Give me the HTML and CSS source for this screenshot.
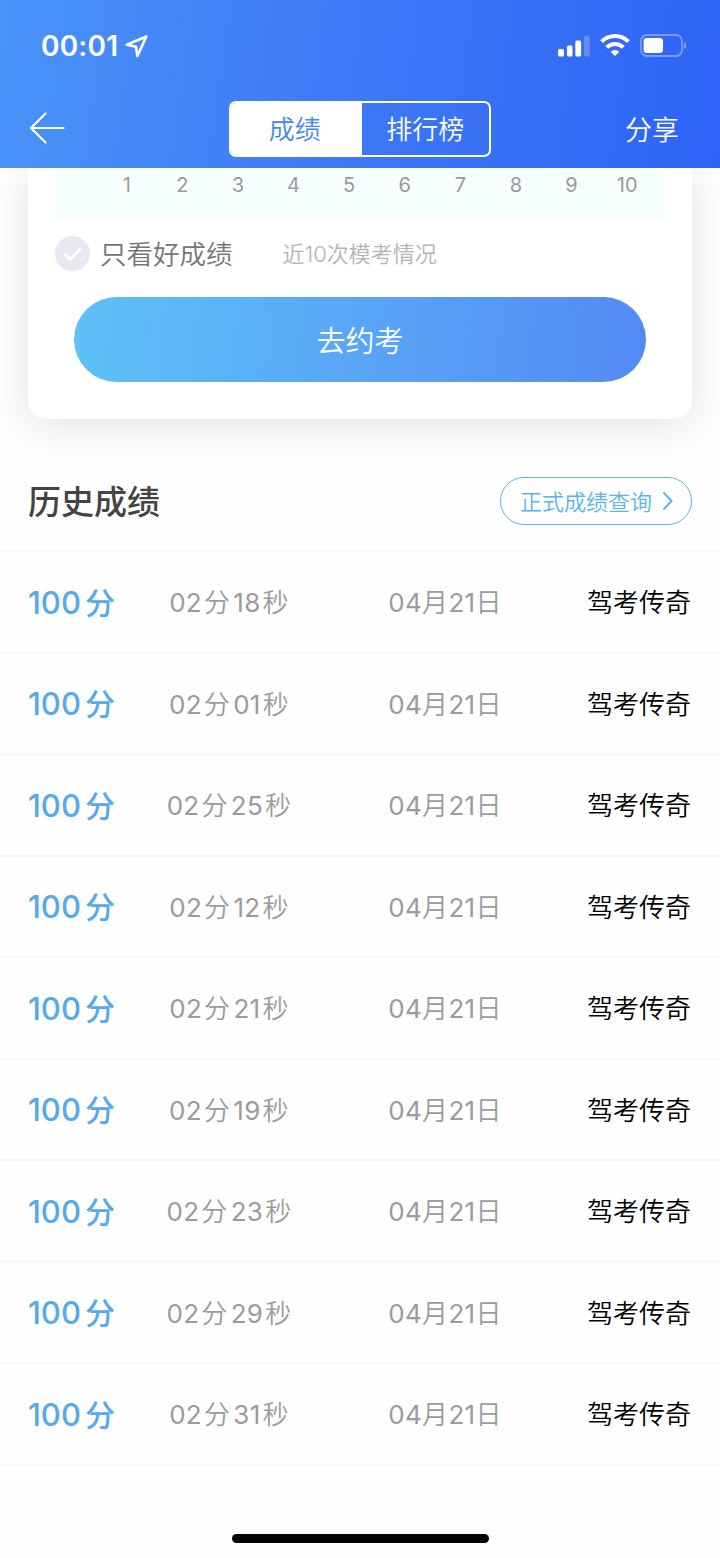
FILE: index.html
```html
<!DOCTYPE html>
<html lang="zh-CN">
<head>
  <meta charset="UTF-8">
  <title>成绩</title>
  <meta name="viewport" content="width=device-width, initial-scale=1.0">
  <link rel="stylesheet" href="styles.css">
</head>
<body>

  <header class="header">
    <div class="status">
      <span class="clock">00:01</span>
      <svg class="locate" width="24" height="24" viewBox="0 0 24 24"><path d="M21.3 2.5 1.8 10.7 11 12.8 12.4 22z"/></svg>
      <svg class="signal" width="33" height="22" viewBox="0 0 33 22">
        <rect x="0" y="14" width="6" height="7.5" rx="1.5"/>
        <rect x="9" y="10.5" width="5.5" height="11" rx="1.5"/>
        <rect x="17.3" y="5.5" width="5.8" height="16" rx="1.5"/>
        <rect x="26" y="0.5" width="5.8" height="21" rx="1.5" opacity=".22"/>
      </svg>
      <svg class="wifi" width="30" height="22" viewBox="0 0 30 22">
        <path d="M1.6 7.7a18.8 18.8 0 0 1 26.8 0"/>
        <path d="M6.7 13.4a11.6 11.6 0 0 1 16.6 0"/>
        <path class="dot" d="M10.7 17.9a6 6 0 0 1 8.6 0L15 22z"/>
      </svg>
      <svg class="battery" width="47" height="24" viewBox="0 0 47 24">
        <rect x="1" y="1" width="41" height="21" rx="6" fill="none" stroke="#fff" stroke-width="1.8" opacity=".35"/>
        <rect x="3.6" y="3.9" width="19.4" height="15.2" rx="3" fill="#fff"/>
        <path d="M44 8v7.4a4.2 4.2 0 0 0 0-7.4z" fill="#fff" opacity=".4"/>
      </svg>
    </div>
    <nav class="nav">
      <svg class="back" width="36" height="32" viewBox="0 0 36 32"><path d="M34.500 16H2M16.500 1.500 2 16 16.500 30.500"/></svg>
      <div class="tabs">
        <button class="tab active">成绩</button>
        <button class="tab">排行榜</button>
      </div>
      <a class="share">分享</a>
    </nav>
  </header>

  <section class="card">
    <div class="chart">
      <span>1</span><span>2</span><span>3</span><span>4</span><span>5</span><span>6</span><span>7</span><span>8</span><span>9</span><span>10</span>
    </div>
    <div class="filter">
      <svg class="check" width="35" height="35" viewBox="0 0 35 35"><circle cx="17.5" cy="17.5" r="17.5"/><path d="M10.3 18.7 15.2 23.5 25.500 13"/></svg>
      <span class="only">只看好成绩</span>
      <span class="recent">近10次模考情况</span>
    </div>
    <button class="book">去约考</button>
  </section>

  <div class="history-head">
    <h2>历史成绩</h2>
    <a class="query"><span>正式成绩查询</span><svg width="12" height="20" viewBox="0 0 12 20"><path d="M2 2l7.500 8L2 18"/></svg></a>
  </div>

  <ul class="history">
    <li><b>100<i>分</i></b><span class="time">02<i>分</i>18<i>秒</i></span><span class="date">04<i>月</i>21<i>日</i></span><span class="name">驾考传奇</span></li>
    <li><b>100<i>分</i></b><span class="time">02<i>分</i>01<i>秒</i></span><span class="date">04<i>月</i>21<i>日</i></span><span class="name">驾考传奇</span></li>
    <li><b>100<i>分</i></b><span class="time">02<i>分</i>25<i>秒</i></span><span class="date">04<i>月</i>21<i>日</i></span><span class="name">驾考传奇</span></li>
    <li><b>100<i>分</i></b><span class="time">02<i>分</i>12<i>秒</i></span><span class="date">04<i>月</i>21<i>日</i></span><span class="name">驾考传奇</span></li>
    <li><b>100<i>分</i></b><span class="time">02<i>分</i>21<i>秒</i></span><span class="date">04<i>月</i>21<i>日</i></span><span class="name">驾考传奇</span></li>
    <li><b>100<i>分</i></b><span class="time">02<i>分</i>19<i>秒</i></span><span class="date">04<i>月</i>21<i>日</i></span><span class="name">驾考传奇</span></li>
    <li><b>100<i>分</i></b><span class="time">02<i>分</i>23<i>秒</i></span><span class="date">04<i>月</i>21<i>日</i></span><span class="name">驾考传奇</span></li>
    <li><b>100<i>分</i></b><span class="time">02<i>分</i>29<i>秒</i></span><span class="date">04<i>月</i>21<i>日</i></span><span class="name">驾考传奇</span></li>
    <li><b>100<i>分</i></b><span class="time">02<i>分</i>31<i>秒</i></span><span class="date">04<i>月</i>21<i>日</i></span><span class="name">驾考传奇</span></li>
  </ul>

  <div class="home-bar"></div>

</body>
</html>
```
FILE: styles.css
```css
:root{
  --blue:#56a9ea;--line:#f8f8f8;--gray:#9b9b9b
}
*{box-sizing:border-box;margin:0;padding:0}
body{
  font-family:Inter,'Noto Sans CJK SC',sans-serif;
  height:1558px;background:#fefefe;color:#000;
  display:flex;flex-direction:column;overflow:hidden
}
button{font:inherit;border:none;background:none;color:inherit}
i{font-style:normal}

/* Header */
.header{
  position:relative;z-index:1;height:168px;flex:none;color:#fff;
  background:linear-gradient(98deg,#4a93f8 0%,#3d78f6 50%,#2e63f6 100%)
}
.status{display:flex;align-items:center;height:92px;padding:0 33px 0 41px}
.clock{font-size:28px;font-weight:600;letter-spacing:.2px}
.locate{margin-left:7px}
.locate path{fill:none;stroke:#fff;stroke-width:2.6;stroke-linejoin:round}
.signal{margin-left:auto;fill:#fff;margin-top:-1px}
.wifi{margin:-2px 0 0 9px;fill:none;stroke:#fff;stroke-width:4}
.wifi .dot{fill:#fff;stroke:none}
.battery{margin-left:10px}
.nav{display:flex;align-items:center;justify-content:space-between;height:73px;padding:0 41px 0 29px}
.back{margin-top:-1px}
.back path{fill:none;stroke:#fff;stroke-width:2.2;stroke-linecap:round;stroke-linejoin:round}
.tabs{display:flex;width:262px;height:56px;border:2px solid #fff;border-radius:7px;overflow:hidden;margin-left:30px}
.tab{flex:1;font-size:26px;font-weight:350;padding-bottom:3px}
.tab.active{background:#fff;color:#4287f0;padding-right:3px}
.share{font-size:27px;font-weight:350;padding-bottom:1px}

/* Card */
.card{
  flex:none;height:251px;margin:0 28px;padding:0 28px;background:#fff;
  border-radius:0 0 18px 18px;box-shadow:0 6px 44px rgba(0,0,0,.11)
}
.chart{
  display:flex;height:52px;padding:4px 9px 0 43px;
  background:#f7fffe;border-radius:0 0 6px 6px;color:#979b9b;font-size:20px
}
.chart span{flex:1;text-align:center;line-height:26px}
.filter{display:flex;align-items:center;height:67px}
.check{fill:#e8e8f2;margin-left:-1px}
.check path{fill:none;stroke:#fff;stroke-width:3;stroke-linecap:round;stroke-linejoin:round}
.only{margin-left:10px;padding-bottom:2px;font-size:26.5px;font-weight:350;color:#757575}
.recent{margin-left:50px;padding-bottom:3px;font-size:22px;font-weight:350;color:#b4b4b4}
.book{
  display:block;width:572px;height:85px;margin:10px auto 0;padding-bottom:1px;border-radius:43px;
  background:linear-gradient(95deg,#5ec1f7,#538af5);color:#fff;font-size:29px;font-weight:350
}

/* History */
.history-head{
  flex:none;display:flex;align-items:center;justify-content:space-between;
  height:134px;padding:30px 28px 0
}
.history-head h2{font-size:33px;font-weight:500;color:#444;padding-bottom:2px}
.query{
  display:flex;align-items:center;width:192px;height:48px;padding-left:19px;margin-bottom:1px;
  border:1px solid #5fb3ee;border-radius:24px;color:#5bb4ea;font-size:22px;font-weight:350
}
.query span{padding-bottom:2px}
.query svg{margin-left:10px;fill:none;stroke:#5bb4ea;stroke-width:2;stroke-linecap:round}
.history{list-style:none;border-top:2px solid var(--line);margin-top:-3px}
.history li{
  display:grid;grid-template-columns:118px 166px 266px 1fr;align-items:center;
  height:101.5px;padding:0 29px 2px 28px;border-bottom:2px solid var(--line);font-size:26px
}
.history b{font-size:31px;font-weight:500;color:var(--blue)}
.history b i{font-size:30px;margin-left:4px}
.time,.date{text-align:center;color:var(--gray);white-space:nowrap}
.time i,.date i{font-weight:350}
.time{letter-spacing:.3px}
.time i{margin-left:2px}
.time i:first-child{margin-right:3px}
.date{letter-spacing:.3px}
.name{text-align:right;font-weight:350}
.home-bar{width:257px;height:9px;margin:auto auto 15px;background:#000;border-radius:5px}
```
